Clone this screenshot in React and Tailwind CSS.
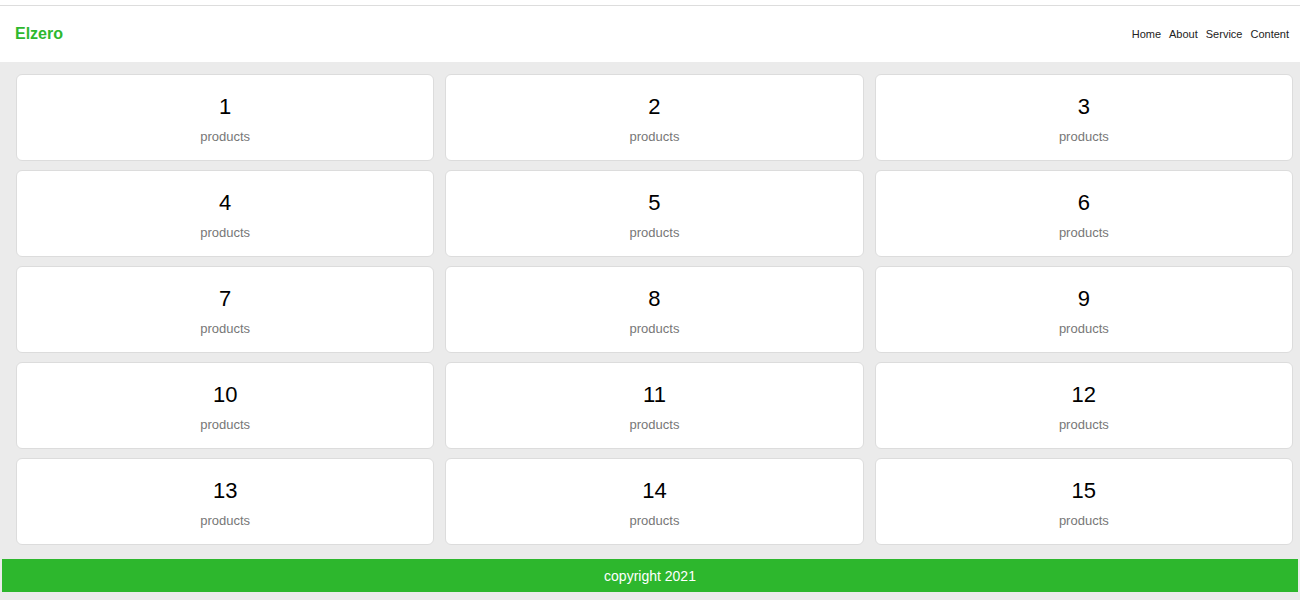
export default function App() {
  const items = Array.from({ length: 15 }, (_, i) => i + 1);
  return (
    <div className="min-h-[600px] bg-[#ebebeb]" style={{ fontFamily: '"Liberation Sans", Arial, sans-serif' }}>
      <div className="h-[5px] bg-white" />
      <div className="h-px bg-[#dddddd]" />
      <header className="h-[56px] bg-white flex items-center justify-between pl-[15px] pr-[11px]">
        <div className="text-[16px] font-bold text-[#2eb82e] leading-none">Elzero</div>
        <nav className="flex gap-[8px] text-[11px] text-[#222]">
          <a>Home</a>
          <a>About</a>
          <a>Service</a>
          <a>Content</a>
        </nav>
      </header>
      <main className="pt-[12px] pb-[14px] pl-[16px] pr-[7px] grid grid-cols-3 gap-x-[11px] gap-y-[9px]">
        {items.map((n) => (
          <div key={n} className="h-[87px] bg-white border border-[#dcdcdc] rounded-[6px] flex flex-col items-center pt-[19px]">
            <div className="text-[22px] leading-[26px] text-black">{n}</div>
            <div className="mt-[9px] text-[13px] leading-[16px] text-[#777]">products</div>
          </div>
        ))}
      </main>
      <footer className="mx-[2px] h-[33px] pt-px bg-[#2db72d] flex items-center justify-center text-white text-[14px]">
        copyright 2021
      </footer>
    </div>
  );
}
